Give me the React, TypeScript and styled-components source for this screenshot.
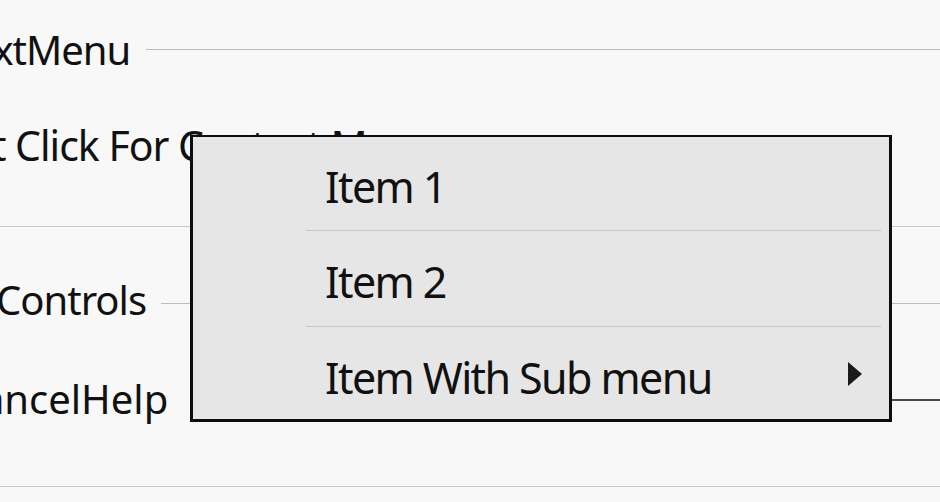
import React from 'react';
import styled, { createGlobalStyle } from 'styled-components';

const GlobalStyle = createGlobalStyle`
  html, body {
    margin: 0;
    padding: 0;
    background: #f8f8f8;
  }
  body {
    font-family: "Noto Sans", "Open Sans", "DejaVu Sans", sans-serif;
    color: #111;
  }
`;

const Page = styled.div`
  position: relative;
  width: 940px;
  height: 502px;
  overflow: hidden;
  background: #f8f8f8;
  padding-top: 24px;
  box-sizing: border-box;
`;

const HeaderRow = styled.div<{ $top?: number }>`
  display: flex;
  align-items: center;
  height: 52px;
  margin-top: ${({ $top }) => $top ?? 0}px;
`;

const Title = styled.span<{ $shift: number; $tight?: boolean }>`
  font-size: 40px;
  line-height: 52px;
  letter-spacing: ${({ $tight }) => ($tight ? '-1px' : '0')};
  white-space: nowrap;
  margin-left: ${({ $shift }) => $shift}px;
`;

const HeaderLine = styled.div<{ $gap: number; $dy: number }>`
  flex: 1;
  height: 1px;
  background: #b9bdc2;
  margin-left: ${({ $gap }) => $gap}px;
  transform: translateY(${({ $dy }) => $dy}px);
`;

const Hint = styled.div<{ $top: number; $shift: number }>`
  font-size: 41px;
  line-height: 52px;
  letter-spacing: -1px;
  white-space: nowrap;
  margin-top: ${({ $top }) => $top}px;
  margin-left: ${({ $shift }) => $shift}px;
`;

const Divider = styled.div<{ $top: number; $color?: string }>`
  height: 1px;
  background: ${({ $color }) => $color ?? '#c3c7cb'};
  margin-top: ${({ $top }) => $top}px;
`;

const ButtonRow = styled.div<{ $top: number }>`
  display: flex;
  align-items: center;
  height: 52px;
  margin-top: ${({ $top }) => $top}px;
`;

const DarkRule = styled.div`
  flex: 1;
  height: 2px;
  background: #4a4a4a;
  margin-left: 260px;
  transform: translateY(1px);
`;

const Menu = styled.div`
  position: absolute;
  left: 190px;
  top: 135px;
  width: 702px;
  height: 287px;
  box-sizing: border-box;
  border: 3px solid #0d0d0d;
  border-top-width: 2px;
  background: #e6e6e6;
  display: flex;
  flex-direction: column;
`;

const MenuItem = styled.div<{ $last?: boolean }>`
  position: relative;
  height: ${({ $last }) => ($last ? 92 : 96)}px;
  display: flex;
  align-items: flex-start;
  padding-left: 132px;
  padding-right: 27px;
  box-sizing: border-box;

  &::after {
    content: '';
    display: ${({ $last }) => ($last ? 'none' : 'block')};
    position: absolute;
    left: 113px;
    right: 8px;
    bottom: 1px;
    height: 1px;
    background: #c6c6c6;
  }
`;

const ItemLabel = styled.span`
  flex: 1;
  font-size: 43px;
  line-height: 56px;
  letter-spacing: -1.6px;
  margin-top: 22px;
  white-space: nowrap;
  color: #111;
`;

const SubArrow = styled.svg`
  width: 14px;
  height: 24px;
  margin-top: 34px;
  fill: #1a1a1a;
`;

const menuItems = [
  { label: 'Item 1', sub: false },
  { label: 'Item 2', sub: false },
  { label: 'Item With Sub menu', sub: true },
];

const App: React.FC = () => {
  return (
    <>
      <GlobalStyle />
      <Page>
        <HeaderRow>
          <Title $shift={-113} $tight>ContextMenu</Title>
          <HeaderLine $gap={16} $dy={-1} />
        </HeaderRow>

        <Hint $top={43} $shift={-91}>Right Click For Context Menu</Hint>

        <Divider $top={55} />

        <HeaderRow $top={47}>
          <Title $shift={-4} $tight>Controls</Title>
          <HeaderLine $gap={15} $dy={3} />
        </HeaderRow>

        <ButtonRow $top={47}>
          <Title $shift={-96}>OkCancelHelp</Title>
          <DarkRule />
        </ButtonRow>

        <Divider $top={61} $color="#c6cace" />

        <Menu>
          {menuItems.map((item, index) => (
            <MenuItem key={item.label} $last={index === menuItems.length - 1}>
              <ItemLabel>{item.label}</ItemLabel>
              {item.sub && (
                <SubArrow viewBox="0 0 14 24">
                  <polygon points="0,0 14,12 0,24" />
                </SubArrow>
              )}
            </MenuItem>
          ))}
        </Menu>
      </Page>
    </>
  );
};

export default App;
